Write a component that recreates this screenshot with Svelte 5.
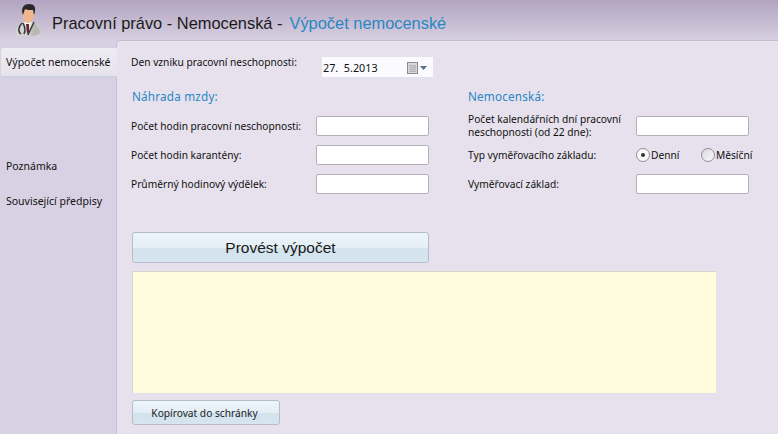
<script>
  const leftRows = ['Počet hodin pracovní neschopnosti:', 'Počet hodin karantény:', 'Průměrný hodinový výdělek:'];
</script>

<div class="app">
  <header class="top">
    <svg class="doc" viewBox="0 0 26 32" width="26" height="32">
      <path d="M1 32 C0 24 4 19 9 18 L18 18 C23 19 26 24 25 32 Z" fill="#d4d3cf"/>
      <path d="M16 32 C20 32 24 31 25 29 C25 24 22 20 18 18 Z" fill="#b9b8b4"/>
      <path d="M9 18 L13 26 L17 18 Z" fill="#f4f1ea"/>
      <path d="M11 20 L14 20 L14 28 L12 30 Z" fill="#6a2530"/>
      <path d="M7 19 C3 23 3 28 6 30 M9 30 C11 26 9 21 8 19 M19 18 L13 31" fill="none" stroke="#35383f" stroke-width="1.5"/>
      <path d="M8 6 C8 2 18 2 19 6 L19 11 C19 16 15 19 13 19 C10 19 8 15 8 11 Z" fill="#efb78d"/>
      <path d="M8 11 C5 3 10 0 14 0 C19 0 22 3 19 11 L18 6 C15 6 11 6 10 5 Z" fill="#29272a"/>
    </svg>
    <span class="title">Pracovní právo - Nemocenská -</span>
    <span class="title accent">Výpočet nemocenské</span>
  </header>

  <div class="body">
    <nav class="side">
      <div class="tab active">Výpočet nemocenské</div>
      <div class="tab second">Poznámka</div>
      <div class="tab">Související předpisy</div>
    </nav>

    <main class="panel">
      <div class="date-row">
        <span class="label">Den vzniku pracovní neschopnosti:</span>
        <div class="date">
          <span>27. &nbsp;5.2013</span>
          <svg viewBox="0 0 20 12" width="20" height="12">
            <rect x="0.5" y="0.5" width="10" height="11" fill="#d8d8dc" stroke="#8a8a90"/>
            <path d="M2 3.5H9M2 5.5H9M2 7.5H9M2 9.5H9M4 3V10M6 3V10M8 3V10" stroke="#a8a8ae" stroke-width="0.6"/>
            <path d="M13 4H20L16.5 8Z" fill="#5b6f8c"/>
          </svg>
        </div>
      </div>

      <div class="columns">
        <section class="col-left">
          <h2>Náhrada mzdy:</h2>
          {#each leftRows as row}
            <div class="row">
              <span class="label">{row}</span>
              <div class="input"></div>
            </div>
          {/each}
        </section>

        <section class="col-right">
          <h2>Nemocenská:</h2>
          <div class="row">
            <span class="label two">Počet kalendářních dní pracovní neschopnosti (od 22 dne):</span>
            <div class="input"></div>
          </div>
          <div class="row">
            <span class="label">Typ vyměřovacího základu:</span>
            <div class="radios">
              <span class="radio-item"><span class="radio on"></span>Denní</span>
              <span class="radio-item"><span class="radio"></span>Měsíční</span>
            </div>
          </div>
          <div class="row">
            <span class="label">Vyměřovací základ:</span>
            <div class="input"></div>
          </div>
        </section>
      </div>

      <button class="btn big">Provést výpočet</button>
      <div class="result"></div>
      <button class="btn small">Kopírovat do schránky</button>
    </main>
  </div>
</div>

<style>
  :global(body) {
    margin: 0;
  }
  .app {
    width: 778px;
    height: 434px;
    overflow: hidden;
    display: flex;
    flex-direction: column;
    background: #d8d1e3;
    font-family: "Noto Sans", "DejaVu Sans", sans-serif;
    font-size: 10.2px;
    color: #111;
  }
  .top {
    height: 40px;
    flex: none;
    display: flex;
    align-items: center;
    padding-left: 15px;
    box-sizing: border-box;
    background: linear-gradient(#b2a4c1, #d6cfe0);
  }
  .doc {
    margin-right: 11px;
  }
  .title {
    font-family: "Liberation Sans", Arial, sans-serif;
    font-size: 16.4px;
    color: #1a1a1a;
    margin-top: 7px;
    white-space: nowrap;
  }
  .accent {
    color: #2a87c4;
    margin-left: 7px;
  }
  .body {
    flex: 1;
    display: flex;
    min-height: 0;
  }
  .side {
    width: 116px;
    flex: none;
    padding-top: 7px;
    box-sizing: border-box;
    font-size: 10.5px;
  }
  .tab {
    height: 29px;
    line-height: 29px;
    padding-left: 6px;
    white-space: nowrap;
    margin-left: 1px;
    margin-bottom: 6px;
    text-indent: -1px;
  }
  .tab.active {
    height: 30px;
    line-height: 28px;
    width: 116px;
    background: linear-gradient(#eeecf3, #e6e2ec);
    border-radius: 3px 0 0 3px;
    border-top: 1px solid #cfd0e0;
    border-bottom: 1px solid #c8d0e0;
    box-sizing: border-box;
    margin-bottom: 0;
    position: relative;
    z-index: 1;
  }
  .tab.second {
    margin-top: 75px;
  }
  .panel {
    flex: 1;
    background: #e6e1ec;
    border-radius: 4px 0 0 0;
    border-left: 1px solid #c6bfd2;
    border-top: 1px solid #c4bcd0;
    box-sizing: border-box;
    padding: 16px 0 0 14px;
    display: flex;
    flex-direction: column;
    align-items: flex-start;
  }
  .label {
    white-space: nowrap;
    line-height: 13px;
  }
  .date-row {
    display: flex;
    height: 20px;
    position: relative;
  }
  .date-row .label {
    width: 191px;
    margin-top: -1px;
  }
  .date {
    width: 111px;
    height: 20px;
    background: #fbfbfd;
    display: flex;
    align-items: center;
    justify-content: space-between;
    padding: 1px 6px 0 1px;
    box-sizing: border-box;
    color: #111;
    font-size: 10.8px;
  }
  .columns {
    display: flex;
    margin-top: 11px;
    height: 139px;
  }
  .col-left {
    width: 337px;
  }
  h2 {
    margin: 0 0 12px;
    font-size: 11.7px;
    font-weight: 400;
    line-height: 16px;
    color: #2a87c4;
    letter-spacing: 0.2px;
  }
  .col-left h2 {
    margin-left: 1px;
  }
  .row {
    display: flex;
    align-items: center;
    height: 20px;
    margin-bottom: 9px;
  }
  .col-left .row .label {
    width: 185px;
    flex: none;
  }
  .col-right .row .label {
    width: 168px;
    flex: none;
    white-space: normal;
  }
  .input {
    width: 113px;
    height: 20px;
    flex: none;
    box-sizing: border-box;
    background: #fff;
    border: 1px solid #b4b0ba;
    border-radius: 2px;
  }
  .radios {
    display: flex;
    flex: none;
    white-space: nowrap;
  }
  .radio-item {
    display: flex;
    align-items: center;
    flex: none;
    width: 65px;
  }
  .radio {
    width: 14px;
    height: 14px;
    box-sizing: border-box;
    border-radius: 50%;
    border: 1px solid #8f8f96;
    background: linear-gradient(135deg, #d8d8dc, #fafafa);
    margin-right: 1px;
    display: flex;
    align-items: center;
    justify-content: center;
  }
  .radio.on {
    background: #f8f8f8;
  }
  .radio.on::after {
    content: "";
    width: 4px;
    height: 4px;
    border-radius: 50%;
    background: #333;
  }
  .btn {
    font-family: "Liberation Sans", Arial, sans-serif;
    box-sizing: border-box;
    border: 1px solid #b8bcc9;
    border-radius: 3px;
    margin: 0 0 0 1px;
    padding: 0;
    color: #1a1a1a;
    background: linear-gradient(#eef5fa 0%, #e3eef5 50%, #d3e3ee 52%, #d6e5f0 100%);
  }
  .big {
    width: 297px;
    height: 31px;
    font-size: 15.5px;
    margin-top: 5px;
  }
  .result {
    width: 584px;
    height: 122px;
    margin: 8px 0 0 1px;
    box-sizing: border-box;
    background: #fffbdc;
    border: 1px solid #d9d5d0;
    border-bottom: 0;
    border-right: 0;
  }
  .small {
    width: 148px;
    height: 25px;
    margin-top: 7px;
    padding-right: 3px;
    font-family: "Noto Sans", "DejaVu Sans", sans-serif;
    font-size: 10.2px;
  }
</style>
